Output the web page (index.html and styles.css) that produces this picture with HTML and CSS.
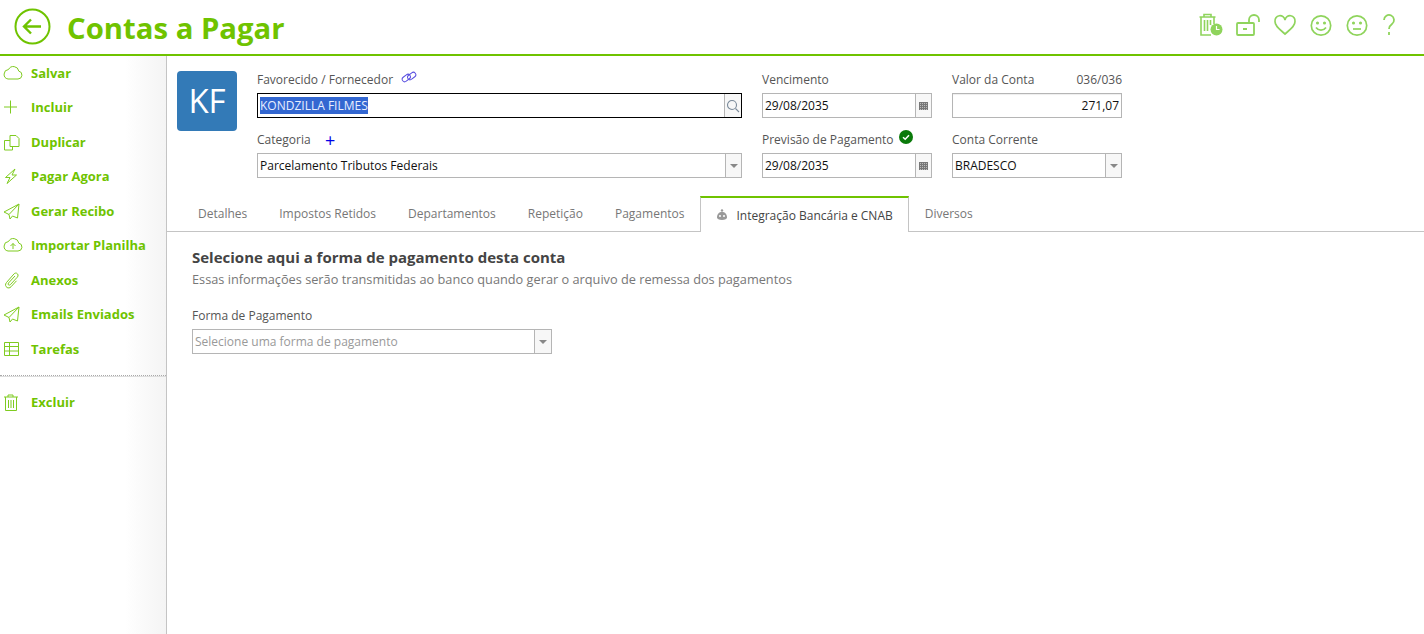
FILE: index.html
```html
<!DOCTYPE html>
<html>
<head>
  <title>Contas a Pagar</title>
  <link rel="stylesheet" href="styles.css">
</head>
<body>
  <header class="topbar">
    <div class="topbar-left">
      <svg class="back-icon" viewBox="0 0 38 38" fill="none" stroke="#6fc300" stroke-width="2">
        <circle cx="18.500" cy="18.500" r="17"/>
        <path d="M27 18.500H10.500M17 11.500l-7 7 7 7" stroke-width="2.400"/>
      </svg>
      <h1>Contas a Pagar</h1>
    </div>
    <div class="topbar-icons">
      <svg width="24" height="24" viewBox="0 0 24 24" fill="none" stroke="#8fd45c" stroke-width="1.600">
        <path d="M.5 4h16M5 4V1.500h7V4M2 4v18h10M15 4v7M5.500 7v11M8.500 7v11M11.500 7v5"/>
        <circle cx="17.500" cy="16.500" r="6" fill="#8fd45c" stroke="none"/>
        <path d="M17.500 13v3.500h3" stroke="#fff" stroke-width="1.200"/>
      </svg>
      <svg class="icon-gap" width="24" height="24" viewBox="0 0 24 24" fill="none" stroke="#8fd45c" stroke-width="1.800">
        <rect x="1" y="10" width="17" height="12" rx="1"/>
        <path d="M13 10V7a5 5 0 0 1 10 0v2M7 16h4"/>
      </svg>
      <svg class="icon-gap" width="24" height="24" viewBox="0 0 24 24" fill="none" stroke="#8fd45c" stroke-width="1.700">
        <path d="M12 21C7 16.500 2 13.500 2 8.500a5 5 0 0 1 10-1.500 5 5 0 0 1 10 1.500c0 5-5 8-10 12.500z"/>
      </svg>
      <svg width="24" height="24" viewBox="0 0 24 24" fill="none" stroke="#8fd45c" stroke-width="1.700">
        <circle cx="12" cy="12.500" r="9.700"/>
        <circle cx="8.500" cy="10" r=".7" fill="#8fd45c"/>
        <circle cx="15.500" cy="10" r=".7" fill="#8fd45c"/>
        <path d="M7 14.500c2.500 3.500 7.500 3.500 10 0"/>
      </svg>
      <svg width="24" height="24" viewBox="0 0 24 24" fill="none" stroke="#8fd45c" stroke-width="1.700">
        <circle cx="12" cy="12.500" r="9.700"/>
        <circle cx="8.500" cy="10" r=".7" fill="#8fd45c"/>
        <circle cx="15.500" cy="10" r=".7" fill="#8fd45c"/>
        <path d="M8 16h8"/>
      </svg>
      <svg class="icon-help" width="18" height="24" viewBox="0 0 18 24" fill="none" stroke="#8fd45c" stroke-width="1.800">
        <path d="M4 7a5 5 0 1 1 8 4c-2 1.500-3 2.500-3 5M9 19v3"/>
      </svg>
    </div>
  </header>

  <div class="page">
    <nav class="sidebar">
      <a class="side-item">
        <svg viewBox="0 0 20 20"><path d="M5 16h10a4 4 0 0 0 .8-7.900A5.500 5.500 0 0 0 5.500 6.500 4.800 4.800 0 0 0 5 16z"/></svg>
        <span>Salvar</span>
      </a>
      <a class="side-item">
        <svg viewBox="0 0 20 20"><path d="M7.500 3.500v13M1 10h13"/></svg>
        <span>Incluir</span>
      </a>
      <a class="side-item">
        <svg viewBox="0 0 20 20"><path d="M7 8.500H1.500V18h8v-3.500M7 3.500h6l3 3v8H7z"/></svg>
        <span>Duplicar</span>
      </a>
      <a class="side-item">
        <svg viewBox="0 0 20 20"><path d="M12 3L2.500 11.500H7l-3 6 9.500-8.500H9z"/></svg>
        <span>Pagar Agora</span>
      </a>
      <a class="side-item">
        <svg viewBox="0 0 20 20"><path d="M16 3L1 11l5 2.500L16 3l-1.500 14-5-2L7 18l-1-4.500"/></svg>
        <span>Gerar Recibo</span>
      </a>
      <a class="side-item">
        <svg viewBox="0 0 20 20"><path d="M5 16h10a4 4 0 0 0 .8-7.900A5.500 5.500 0 0 0 5.500 6.500 4.800 4.800 0 0 0 5 16zM10 14V8.500M7.500 11L10 8.500 12.500 11"/></svg>
        <span>Importar Planilha</span>
      </a>
      <a class="side-item">
        <svg viewBox="0 0 20 20"><path d="M12 6l-6.500 7c-1.300 1.400.5 3 1.800 1.700l7-7.500c2.300-2.400-1-5.700-3.300-3.300L3.500 12.500c-3 3.300 1.500 7.500 4.500 4.300l5.500-6"/></svg>
        <span>Anexos</span>
      </a>
      <a class="side-item">
        <svg viewBox="0 0 20 20"><path d="M16 3L1 11l5 2.500L16 3l-1.500 14-5-2L7 18l-1-4.500"/></svg>
        <span>Emails Enviados</span>
      </a>
      <a class="side-item">
        <svg viewBox="0 0 20 20"><path d="M1.500 3.500h14v13h-14zM1.500 7.500h14M1.500 12h14M6.500 3.500v13"/></svg>
        <span>Tarefas</span>
      </a>
      <div class="side-divider"></div>
      <a class="side-item">
        <svg viewBox="0 0 20 20"><path d="M1 5h14M5 5V3h5v2M2.500 5v13.500h11V5M5.500 8v8M8 8v8M10.500 8v8"/></svg>
        <span>Excluir</span>
      </a>
    </nav>

    <main class="content">
      <section class="form-head">
        <div class="avatar">KF</div>
        <div class="form-grid">
          <div class="field">
            <label>Favorecido / Fornecedor
              <svg class="link-icon" width="16" height="12" viewBox="0 0 16 12" fill="none" stroke="#5a50e0" stroke-width="1">
                <rect x=".8" y="4.500" width="9" height="5" rx="2.500" transform="rotate(-38 5.300 7)"/>
                <rect x="6.200" y="2.500" width="9" height="5" rx="2.500" transform="rotate(-38 10.700 5)"/>
              </svg>
            </label>
            <div class="input focused">
              <span class="value"><span class="selected">KONDZILLA FILMES</span></span>
              <span class="addon">
                <svg width="14" height="14" viewBox="0 0 14 14" fill="none" stroke="#7a8a9a" stroke-width="1.100">
                  <circle cx="6" cy="6" r="4.500"/>
                  <path d="M9.500 9.500L13 13"/>
                </svg>
              </span>
            </div>
          </div>
          <div class="field">
            <label>Vencimento</label>
            <div class="input">
              <span class="value">29/08/2035</span>
              <span class="addon"><i class="cal"></i></span>
            </div>
          </div>
          <div class="field">
            <label class="label-split">Valor da Conta <span>036/036</span></label>
            <div class="input input-shade">
              <span class="value value-right">271,07</span>
            </div>
          </div>
          <div class="field">
            <label>Categoria <b class="plus">+</b></label>
            <div class="input">
              <span class="value">Parcelamento Tributos Federais</span>
              <span class="addon"><i class="caret"></i></span>
            </div>
          </div>
          <div class="field">
            <label>Previsão de Pagamento
              <svg class="check-icon" width="14" height="14" viewBox="0 0 14 14">
                <circle cx="7" cy="7" r="7" fill="#0a7a0a"/>
                <path d="M4 7.200l2.200 2L10 5.200" fill="none" stroke="#fff" stroke-width="1.500"/>
              </svg>
            </label>
            <div class="input">
              <span class="value">29/08/2035</span>
              <span class="addon"><i class="cal"></i></span>
            </div>
          </div>
          <div class="field">
            <label>Conta Corrente</label>
            <div class="input">
              <span class="value">BRADESCO</span>
              <span class="addon"><i class="caret"></i></span>
            </div>
          </div>
        </div>
      </section>

      <div class="tabs">
        <a class="tab">Detalhes</a>
        <a class="tab">Impostos Retidos</a>
        <a class="tab">Departamentos</a>
        <a class="tab">Repetição</a>
        <a class="tab">Pagamentos</a>
        <a class="tab active">
          <svg width="12" height="12" viewBox="0 0 12 12">
            <circle cx="6" cy="1.500" r="1.200" fill="#999"/>
            <path d="M1 8.500C1 5 3 3 6 3s5 2 5 5.500c0 1.500-2 2.500-5 2.500S1 10 1 8.500z" fill="#999"/>
            <circle cx="4" cy="7" r="1" fill="#fff"/>
            <circle cx="8" cy="7" r="1" fill="#fff"/>
          </svg>
          Integração Bancária e CNAB
        </a>
        <a class="tab">Diversos</a>
      </div>

      <section class="tab-body">
        <h2>Selecione aqui a forma de pagamento desta conta</h2>
        <p>Essas informações serão transmitidas ao banco quando gerar o arquivo de remessa dos pagamentos</p>
        <div class="field field-pay">
          <label>Forma de Pagamento</label>
          <div class="input">
            <span class="value placeholder">Selecione uma forma de pagamento</span>
            <span class="addon"><i class="caret"></i></span>
          </div>
        </div>
      </section>
    </main>
  </div>
</body>
</html>
```

FILE: styles.css
```css
/* base */
* {
  box-sizing: border-box;
}
html, body {
  height: 100%;
}
body {
  margin: 0;
  font-family: "Open Sans", Arial, sans-serif;
  font-size: 12px;
  color: #555;
  background-color: #fff;
  overflow: hidden;
}

/* top bar */
.topbar {
  height: 56px;
  display: flex;
  justify-content: space-between;
  align-items: center;
  border-bottom: 2px solid #6fc300;
}
.topbar-left {
  display: flex;
  align-items: center;
  padding-left: 14px;
}
.back-icon {
  width: 38px;
  height: 38px;
}
h1 {
  margin: 2px 0 0 15px;
  font-size: 29.3px;
  font-weight: 700;
  color: #6fc300;
}
.topbar-icons {
  display: flex;
  gap: 12px;
  padding-right: 26px;
  margin-top: -4px;
}
.icon-gap {
  margin-left: 1px;
}
.icon-help {
  margin-left: -1px;
}

/* layout */
.page {
  display: flex;
  height: 578px;
}
.sidebar {
  width: 167px;
  flex: none;
  border-right: 1px solid #c4c4c4;
  background: linear-gradient(to right, #fff 75%, #f4f4f4);
}
.side-item {
  display: flex;
  align-items: center;
  height: 34.5px;
  padding-left: 3px;
  font-size: 13px;
  font-weight: 700;
  color: #6fc300;
}
.side-item:first-child {
  margin-top: -0.5px;
}
.side-item svg {
  width: 20px;
  height: 20px;
  margin-right: 8px;
  fill: none;
  stroke: #7fcb20;
  stroke-width: 1;
}
.side-divider {
  height: 2px;
  margin: 9px 0 7.5px;
  border-top: 1px dotted #aaa;
  border-bottom: 1px solid #ddd;
}
.content {
  flex: 1;
}

/* form head */
.form-head {
  display: flex;
  padding: 15px 0 0 10px;
}
.avatar {
  width: 60px;
  height: 60px;
  border-radius: 4px;
  margin-right: 20px;
  background-color: #337ab7;
  color: #fff;
  font-size: 33px;
  line-height: 60px;
  text-align: center;
}
.form-grid {
  display: grid;
  grid-template-columns: 485px 170px 170px;
  column-gap: 20px;
  row-gap: 13px;
}
.field label {
  display: flex;
  align-items: flex-start;
  height: 22px;
  padding-top: 1px;
  line-height: 16px;
  color: #555;
  gap: 8px;
}
.label-split {
  justify-content: space-between;
}
.link-icon {
  margin-top: -1px;
}
.check-icon {
  margin-top: -2px;
  margin-left: -3px;
}
.plus {
  margin-left: 6.5px;
  font-size: 18px;
  font-weight: 400;
  line-height: 16px;
  color: #0000e6;
}
.input {
  display: flex;
  height: 25px;
  border: 1px solid #b5b5b5;
  background-color: #fff;
  color: #111;
}
.input.focused {
  border-color: #000;
}
.input-shade {
  box-shadow: inset 0 1px 1px #eee;
}
.value {
  flex: 1;
  padding-left: 2px;
  line-height: 23px;
  white-space: nowrap;
}
.value-right {
  padding-right: 2px;
  text-align: right;
}
.selected {
  display: inline-block;
  line-height: 17px;
  background-color: #3367d1;
  color: #e8eeff;
}
.placeholder {
  color: #999;
}
.addon {
  width: 16px;
  display: flex;
  align-items: center;
  justify-content: center;
  border-left: 1px solid #b5b5b5;
  background-color: #f7f7f7;
}
.focused .addon {
  width: 17px;
}
.caret {
  width: 0;
  height: 0;
  border-left: 4px solid transparent;
  border-right: 4px solid transparent;
  border-top: 4px solid #888;
}
.cal {
  width: 9px;
  height: 8px;
  background:
    repeating-linear-gradient(to right, #777 0 1px, transparent 1px 2px),
    repeating-linear-gradient(to bottom, #777 0 1px, #bbb 1px 2px);
}

/* tabs */
.tabs {
  display: flex;
  height: 36px;
  margin-top: 18px;
  padding-left: 15px;
  border-bottom: 1px solid #c4c4c4;
}
.tab {
  display: flex;
  align-items: center;
  gap: 8px;
  padding: 0 16px;
  color: #777;
}
.tab.active {
  height: 36px;
  padding: 0 15px;
  border: 1px solid #c4c4c4;
  border-top: 2px solid #6fc300;
  border-bottom: none;
  background-color: #fff;
  color: #444;
}

/* tab body */
.tab-body {
  padding: 15px 25px;
}
h2 {
  margin: 0;
  font-size: 15px;
  font-weight: 700;
  line-height: 20px;
  color: #444;
}
.tab-body p {
  margin: 3px 0 0;
  font-size: 12.75px;
  line-height: 18px;
  color: #777;
}
.field-pay {
  width: 360px;
  margin-top: 19px;
}
.field-pay .addon {
  width: 17px;
}
```
